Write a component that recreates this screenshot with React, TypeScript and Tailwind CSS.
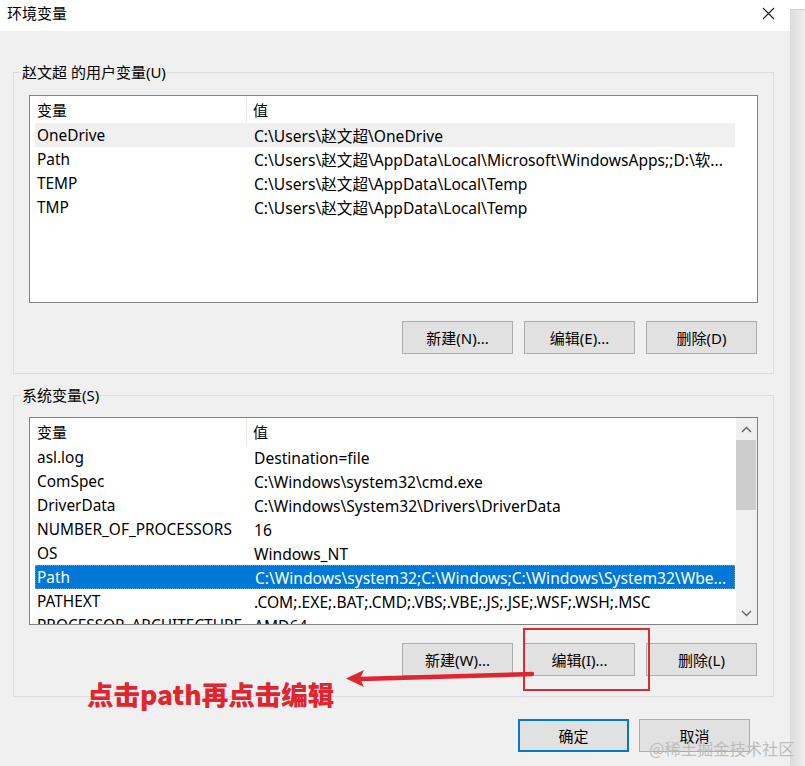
import React from 'react';

const USER_VARS: Array<[string, string]> = [
  ['OneDrive', 'C:\\Users\\赵文超\\OneDrive'],
  ['Path', 'C:\\Users\\赵文超\\AppData\\Local\\Microsoft\\WindowsApps;;D:\\软...'],
  ['TEMP', 'C:\\Users\\赵文超\\AppData\\Local\\Temp'],
  ['TMP', 'C:\\Users\\赵文超\\AppData\\Local\\Temp']
];

const SYSTEM_VARS: Array<[string, string]> = [
  ['asl.log', 'Destination=file'],
  ['ComSpec', 'C:\\Windows\\system32\\cmd.exe'],
  ['DriverData', 'C:\\Windows\\System32\\Drivers\\DriverData'],
  ['NUMBER_OF_PROCESSORS', '16'],
  ['OS', 'Windows_NT'],
  ['Path', 'C:\\Windows\\system32;C:\\Windows;C:\\Windows\\System32\\Wbe...'],
  ['PATHEXT', '.COM;.EXE;.BAT;.CMD;.VBS;.VBE;.JS;.JSE;.WSF;.WSH;.MSC'],
  ['PROCESSOR_ARCHITECTURE', 'AMD64']
];

function Chevron({ up }: { up?: boolean }) {
  return (
    <svg width="11" height="7" viewBox="0 0 11 7" className="block">
      <polyline
        points={up ? '1,6 5.5,1.5 10,6' : '1,1 5.5,5.5 10,1'}
        fill="none"
        stroke="#606060"
        strokeWidth="1.3"
      />
    </svg>
  );
}

function WinButton({ label, primary }: { label: string; primary?: boolean }) {
  return (
    <button
      className={`flex h-[33px] w-[111px] items-center justify-center bg-[#e1e1e1] text-[15px] text-black ${
        primary ? 'border-2 border-[#0078d7]' : 'border border-[#adadad]'
      }`}
    >
      {label}
    </button>
  );
}

function VarList({
  rows,
  hoverRow,
  selectedRow,
  scrollbar
}: {
  rows: Array<[string, string]>;
  hoverRow?: number;
  selectedRow?: number;
  scrollbar?: boolean;
}) {
  return (
    <div className="ml-[8px] flex h-[208px] w-[729px] overflow-hidden border border-[#828282] bg-white">
      <div className="w-[705px] overflow-hidden">
        <div className="ml-[5px] flex h-[27px] w-[700px] items-center">
          <div className="flex h-full w-[212px] items-center border-r border-[#e5e5e5] pl-[2px]">变量</div>
          <div className="pl-[6px]">值</div>
        </div>
        {rows.map(([name, value], i) => {
          const selected = i === selectedRow;
          const hover = i === hoverRow;
          return (
            <div
              key={name + i}
              className={`ml-[5px] flex h-[24px] w-[700px] items-center whitespace-nowrap ${
                selected
                  ? 'border border-dotted border-[#5a9fdc] bg-[#0078d7] text-white'
                  : hover
                    ? 'bg-[#f0f0f0]'
                    : ''
              }`}
            >
              <div className={`w-[212px] shrink-0 overflow-hidden pt-[2px] text-[15.4px] ${selected ? 'pl-[1px]' : 'pl-[2px]'}`}>
                {name}
              </div>
              <div className="overflow-hidden pt-[2px] pl-[7px] text-[15.6px]">{value}</div>
            </div>
          );
        })}
      </div>
      {scrollbar ? (
        <div className="ml-auto flex w-[21px] flex-col bg-[#f0f0f0]">
          <div className="flex h-[22px] items-center justify-center">
            <Chevron up />
          </div>
          <div className="mr-[1px] h-[70px] bg-[#cdcdcd]" />
          <div className="flex-1" />
          <div className="flex h-[22px] items-center justify-center">
            <Chevron />
          </div>
        </div>
      ) : null}
    </div>
  );
}

function GroupBox({
  title,
  children,
  className
}: {
  title: string;
  children: React.ReactNode;
  className?: string;
}) {
  return (
    <fieldset className={`w-[761px] border border-[#dcdcdc] pr-[15px] pl-[7px] ${className ?? ''}`}>
      <legend className="px-[1px] text-[15px] leading-[20px]">{title}</legend>
      {children}
    </fieldset>
  );
}

export default function App() {
  return (
    <div className="relative flex h-[766px] w-[805px] overflow-hidden bg-[#ececec] font-['Noto_Sans','Noto_Sans_CJK_SC',sans-serif] text-[15px] leading-[20px] text-black">
      <div className="flex w-[790px] shrink-0 flex-col bg-[#f0f0f0]">
        <div className="flex h-[31px] shrink-0 items-center justify-between bg-white pr-[15px] pl-[7px]">
          <span className="-mt-[6px]">环境变量</span>
          <svg width="13" height="13" viewBox="0 0 13 13" className="-mt-[5px]">
            <path d="M1 1 L12 12 M12 1 L1 12" stroke="#222" strokeWidth="1.1" />
          </svg>
        </div>

        <div className="flex flex-col pl-[13px]">
          <GroupBox title="赵文超 的用户变量(U)" className="mt-[31px] pb-[19px]">
            <div className="mt-[13px]">
              <VarList rows={USER_VARS} hoverRow={0} />
            </div>
            <div className="mt-[18px] flex justify-end gap-[11px] pr-[1px]">
              <WinButton label="新建(N)..." />
              <WinButton label="编辑(E)..." />
              <WinButton label="删除(D)" />
            </div>
          </GroupBox>

          <GroupBox title="系统变量(S)" className="mt-[11px] pb-[20px]">
            <div className="mt-[12px]">
              <VarList rows={SYSTEM_VARS} selectedRow={5} scrollbar />
            </div>
            <div className="mt-[18px] flex justify-end gap-[11px] pr-[1px]">
              <WinButton label="新建(W)..." />
              <WinButton label="编辑(I)..." />
              <WinButton label="删除(L)" />
            </div>
          </GroupBox>

          <div className="mt-[22px] flex justify-end gap-[10px] pr-[40px]">
            <WinButton label="确定" primary />
            <WinButton label="取消" />
          </div>
        </div>
      </div>

      <div className="flex-1 bg-gradient-to-r from-[#dcdcdc] to-[#eeeeee]">
        <div className="h-[10px] border-b border-[#d0d0d0] bg-white" />
      </div>

      {/* annotation overlay */}
      <div className="absolute top-[628px] left-[523px] h-[63px] w-[127px] border-2 border-[#d52e37]" />
      <svg className="absolute top-[660px] left-[340px]" width="200" height="30" viewBox="0 0 200 30">
        <line x1="192" y1="14" x2="20" y2="19" stroke="#df2630" strokeWidth="4.5" strokeLinecap="round" />
        <polygon points="6,18.5 24,10 20,18.5 24,27" fill="#df2630" />
      </svg>
      <div className="absolute top-[678px] left-[87px] font-['Noto_Sans_CJK_SC',sans-serif] text-[26.5px] leading-[32px] font-black text-[#df2630]">
        点击path再点击编辑
      </div>
      <div className="absolute top-[737px] left-[649px] font-['Noto_Sans_CJK_SC',sans-serif] text-[16.3px] leading-[22px] text-[#bdbdbd]">
        @稀土掘金技术社区
      </div>
    </div>
  );
}
